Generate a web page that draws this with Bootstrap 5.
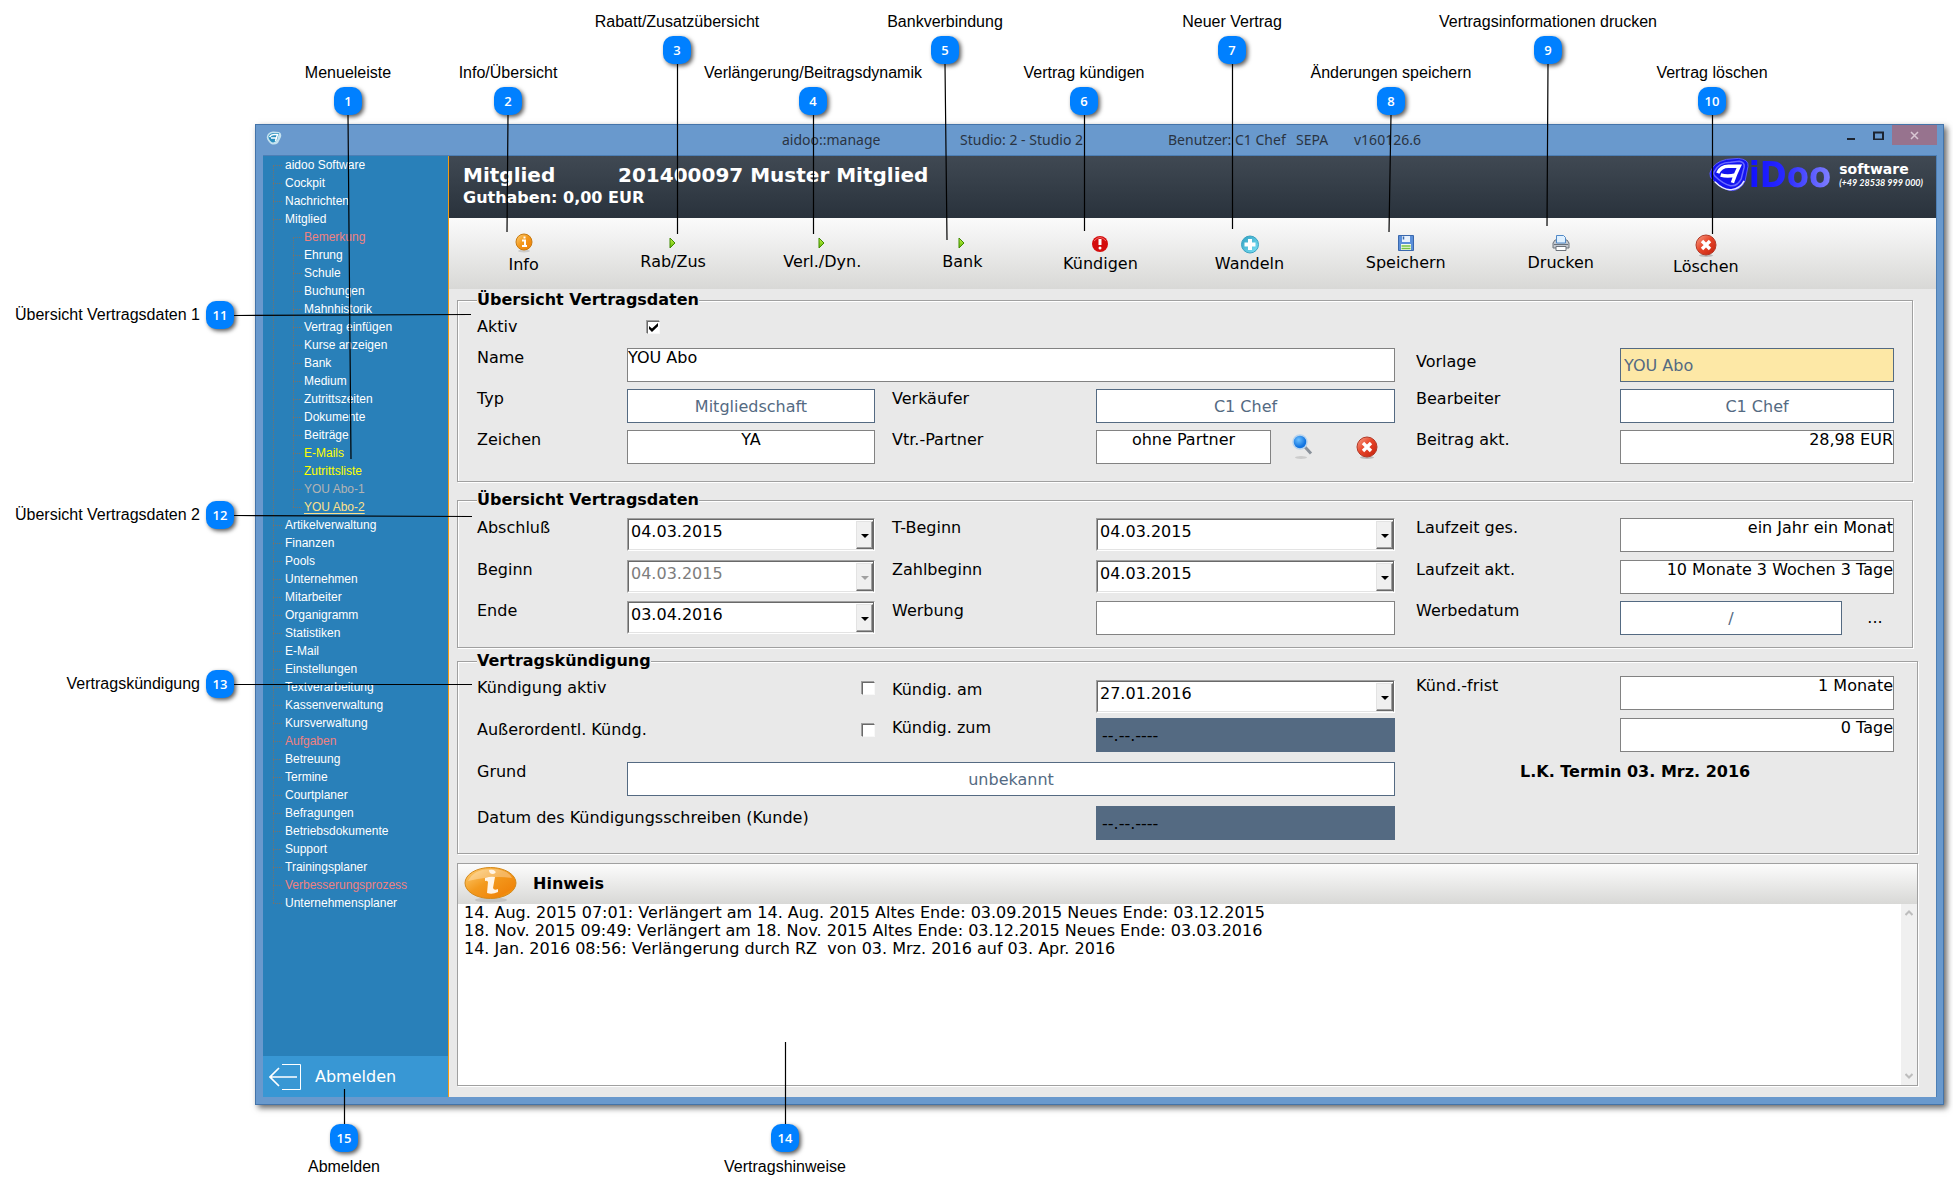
<!DOCTYPE html>
<html lang="de">
<head>
<meta charset="utf-8">
<meta name="viewport" content="width=device-width, initial-scale=1">
<title>aidoo::manage – Vertrag</title>
<link href="https://cdn.jsdelivr.net/npm/bootstrap@5.3.0/dist/css/bootstrap.min.css" rel="stylesheet">
<style>
  :root { --ui: "DejaVu Sans", Verdana, sans-serif; --help: "Liberation Sans", Arial, sans-serif; --steel: #546a82; }
  body { font-family: var(--ui); font-size: 16px; line-height: 20px; color: #000; background: #fff; }
  .stage { min-height: 100vh; padding: 124px 9px 87px 255px; }

  /* application window */
  .app-window { background: #6999cd; border: 1px solid #4474a9; padding: 0 6px 7px 7px; box-shadow: 3px 3px 6px rgba(0,0,0,.6); }
  .title-bar { height: 30px; font: 14px/30px "Noto Sans", sans-serif; color: #2a3442; }
  .title-bar .app-mark { margin: 6px 0 0 3px; }
  .title-bar .t-name { margin-left: 500px; width: 178px; }
  .title-bar .t-studio { width: 208px; }
  .title-bar .t-user { width: 128px; }
  .title-bar .t-sepa { width: 58px; }
  .title-bar button { border: 0; padding: 0; background: none; height: 20px; line-height: 0; }
  .title-bar .btn-min, .title-bar .btn-max { width: 27px; }
  .title-bar .btn-x { width: 45px; background: #97738e; }
  .app-body { border: 1px solid #4d7fb5; border-width: 1px 1px 0 0; }

  /* tree navigation */
  .side { width: 186px; background: #2980b9; border-right: 1px solid #f39c12; font: 12px/18px var(--help); }
  .tree, .tree ul { list-style: none; margin: 0; padding: 0; }
  .tree { padding: 0 0 0 10px; }
  .tree li { position: relative; padding-left: 12px; }
  .tree ul li { padding-left: 11px; }
  .tree ul { margin-left: 8px; }
  .tree li::before { content: ""; position: absolute; left: 0; top: 9px; width: 9px; border-top: 1px dotted #73736f; }
  .tree li:not(:last-child)::after { content: ""; position: absolute; left: 0; top: 9px; bottom: -9px; border-left: 1px dotted #73736f; }
  .tree a { color: #fff; text-decoration: none; display: block; }
  .tree .is-red { color: #f08080; } .tree .is-yellow { color: #ff0; } .tree .is-gray { color: #b4b4b4; }
  .tree .is-current { color: #fde08a; text-decoration: underline 1px; text-underline-offset: 2px; }
  .logout { background: #3897d4; border: 0; height: 41px; padding: 0 6px; color: #fff; font: 16px/20px var(--ui); gap: 13px; }

  /* header and tool bar */
  .member-head { height: 62px; background: linear-gradient(#404953, #29323c); color: #fff; font-weight: 700; padding: 9px 13px 0 14px; }
  .member-head h1 { font-size: 20px; line-height: 20px; font-weight: 700; margin: 0 0 3px; }
  .member-head h1 span { display: inline-block; width: 155px; }
  .member-head p { margin: 0; }
  .brand { margin-top: -8px; }
  .brand-word { font: bold 36px/36px "DejaVu Sans Condensed", "DejaVu Sans", sans-serif; background: linear-gradient(90deg, #1010ff, #2a2aff 45%, #8080ff); -webkit-background-clip: text; background-clip: text; color: transparent; }
  .brand-sub { margin: 5px 0 0 8px; font: bold 14px/15px "DejaVu Sans", sans-serif; }
  .brand-sub small { display: block; font: italic bold 9px/12px Lato, sans-serif; }
  .tools { display: grid; grid-template-columns: 149fr 150fr 148fr 132fr 144fr 154fr 158fr 152fr 138fr 161fr; height: 71px; background: linear-gradient(#fbfbfb, #d8d8d6); padding-top: 13px; }
  .tools button { border: 0; background: none; padding: 0; display: flex; flex-direction: column; align-items: center; color: #000; line-height: 20px; }
  .tools svg { display: block; }

  /* form */
  .work { background: #e9e9e9; padding: 1px 18px 11px 8px; }
  fieldset { border: 1px solid #a0a0a0; box-shadow: 1px 1px 0 #fff, inset 1px 1px 0 #fff; }
  fieldset legend { float: none; width: auto; margin: 0; font-size: 16px; line-height: 20px; font-weight: 700; background: #e9e9e9; }
  .fs-narrow { margin-right: 5px; }
  .fs-one { padding: 7px 18px 15px 19px; }
  .fs-two { padding: 8px 18px 10px 19px; margin-top: 8px; }
  .fs-three { padding: 5px 23px 13px 19px; margin-top: 3px; }
  .form-rows { display: grid; grid-template-columns: 150px 248fr 221px 299fr 225px 274fr; align-items: start; }
  .fs-one .form-rows { grid-template-rows: 31px 41px 41px 36px; }
  .fs-two .form-rows { grid-template-rows: 42px 41px 36px; }
  .fs-three .form-rows { grid-template-rows: 42px 44px 44px 34px; }
  .c1 { grid-column: 1; } .c2 { grid-column: 2; } .c3 { grid-column: 3; padding-left: 17px; } .c4 { grid-column: 4; } .c5 { grid-column: 5; padding-left: 21px; } .c6 { grid-column: 6; }
  .span-24 { grid-column: 2 / 5; } .span-13 { grid-column: 1 / 4; } .span-56 { grid-column: 5 / 7; padding-left: 125px; }
  .drop { padding-top: 4px; }
  .drop-half { padding-top: 2px; }
  .field { width: 100%; height: 34px; border: 1px solid #828282; border-radius: 0; background: #fff; padding: 0 0 15px; color: #000; }
  .field-pick { border-color: var(--steel); color: var(--steel); padding: 0 3px; }
  .field-tpl { background: #fde8a6; }
  .field-off { border: 0; background: var(--steel); padding: 0 6px; color: #000; }
  .combo { position: relative; height: 33px; border: 1px solid; border-color: #a0a0a0 #fff #fff #a0a0a0; }
  .combo select { appearance: none; width: 100%; height: 31px; border: 1px solid; border-color: #696969 #696969 #e3e3e3 #696969; border-radius: 0; background: #fff; padding: 0 0 6px 2px; color: #000; }
  .combo select:disabled { color: #7d7d7d; opacity: 1; }
  .combo span { position: absolute; right: 1px; top: 2px; bottom: 1px; width: 17px; background: #f0f0f0; border: 1px solid; border-color: #e3e3e3 #696969 #696969 #e3e3e3; box-shadow: inset -1px -1px 0 #a0a0a0; pointer-events: none; }
  .combo span::after { content: ""; position: absolute; left: 4px; top: 12px; border: 4px solid transparent; border-top-color: #000; border-bottom: 0; }
  .combo select:disabled + span::after { border-top-color: #a0a0a0; }
  .tick { appearance: none; display: block; width: 13px; height: 13px; margin: 4px 0 0; background: #fff; border: 1px solid; border-color: #696969 #f8f8f8 #f8f8f8 #696969; box-shadow: -1px -1px 0 #a0a0a0; }
  .tick:checked::before { content: ""; display: block; width: 9px; height: 9px; margin: 1px; background: #000; clip-path: polygon(0 33%, 33% 62%, 100% 0, 100% 36%, 33% 100%, 0 68%); }
  .bare { border: 0; background: none; padding: 0; color: #000; }
  .partner-tools { gap: 42px; padding: 0 17px 0 21px; }
  .more { width: 52px; padding: 0 0 0 14px; }

  /* notes */
  .notes { border: 1px solid #a0a0a0; box-shadow: 1px 1px 0 #fff; background: #fff; margin-top: 9px; }
  .notes-head { height: 40px; background: linear-gradient(#fcfcfc, #d8d8d6); font-size: 16px; font-weight: 700; gap: 16px; padding-left: 6px; }
  .notes textarea { border: 0; resize: none; padding: 0 0 0 6px; line-height: 18px; color: #000; overflow: hidden; min-height: 120px; outline: 0; }
  .notes-scroll { width: 16px; background: #f0f0f0; padding: 6px 0; }

  /* numbered callouts laid over the window */
  .lines { position: absolute; inset: 0; width: 100%; height: 100%; pointer-events: none; }
  .pin { position: absolute; display: flex; flex-direction: column; align-items: center; gap: 4px; width: 240px; margin-left: -120px; font: 16px/20px var(--help); white-space: nowrap; }
  .pin b { width: 28px; height: 28px; border-radius: 10px; background: #0080ff; color: #fff; font: 600 13px/28px "Open Sans", sans-serif; text-align: center; box-shadow: 2px 2px 4px rgba(0,0,0,.65); }
  .pin-high { top: 12px; } .pin-low { top: 63px; } .pin-foot { top: 1124px; flex-direction: column-reverse; justify-content: flex-end; gap: 5px; }
  .pin-side { left: 0; margin: 0; width: 234px; flex-direction: row; justify-content: flex-end; gap: 6px; }
  .p1 { left: 348px; } .p2 { left: 508px; } .p3 { left: 677px; } .p4 { left: 813px; } .p5 { left: 945px; }
  .p6 { left: 1084px; } .p7 { left: 1232px; } .p8 { left: 1391px; } .p9 { left: 1548px; } .p10 { left: 1712px; }
  .p11 { top: 301px; } .p12 { top: 501px; } .p13 { top: 670px; } .p14 { left: 785px; } .p15 { left: 344px; }
</style>
<script src="https://cdn.jsdelivr.net/npm/bootstrap@5.3.0/dist/js/bootstrap.bundle.min.js"></script>
</head>
<body>
<svg width="0" height="0" class="position-absolute" aria-hidden="true">
  <defs>
    <linearGradient id="gOrange" x1="0" y1="0" x2="1" y2="1"><stop offset="0" stop-color="#ffd27a"/><stop offset=".45" stop-color="#f39a1e"/><stop offset=".8" stop-color="#f0860c"/><stop offset="1" stop-color="#ffc21a"/></linearGradient>
    <linearGradient id="gRed" x1="0" y1="0" x2="1" y2="1"><stop offset="0" stop-color="#f7a48c"/><stop offset=".45" stop-color="#e8462a"/><stop offset="1" stop-color="#c3200c"/></linearGradient>
    <linearGradient id="gCyan" x1="0" y1="0" x2="1" y2="1"><stop offset="0" stop-color="#2e9fc0"/><stop offset="1" stop-color="#7fe4f8"/></linearGradient>
    <linearGradient id="gGreen" x1="0" y1="0" x2="0" y2="1"><stop offset="0" stop-color="#c6f24a"/><stop offset="1" stop-color="#5fb800"/></linearGradient>
    <radialGradient id="gLens" cx=".4" cy=".35"><stop offset="0" stop-color="#6cc0ff"/><stop offset="1" stop-color="#1274e0"/></radialGradient>
    <symbol id="i-arrow" viewBox="0 0 8 12"><path d="M1 1v10l5-5z" fill="url(#gGreen)" stroke="#3f8a00"/></symbol>
    <symbol id="i-close" viewBox="0 0 22 23"><ellipse cx="11" cy="21.500" rx="7" ry="1.500" fill="#bbb"/><circle cx="11" cy="11" r="10" fill="url(#gRed)" stroke="#b23a28"/><path d="M7 7l8 8M15 7l-8 8" stroke="#fff" stroke-width="3.400"/></symbol>
  </defs>
</svg>

<div class="stage d-flex position-relative">
  <div class="app-window d-flex flex-column flex-grow-1">
    <header class="title-bar d-flex">
      <svg class="app-mark" width="16" height="14" viewBox="0 0 16 14"><path d="M1 5Q2 1 7 0.500L13 1Q16 2 15 6L12 12Q9 14.500 5 13Q0 9 1 5z" fill="#c4e2ef"/><path d="M2.500 5Q4 2 8 2H13L11 9Q8 12.500 5.500 11Q2 8 2.500 5z" fill="#2a8fbe"/><path d="M3.500 6Q5 3.500 8 3.500H11.500L9.500 10M5 7h5" stroke="#fff" stroke-width="1.500" fill="none"/></svg>
      <span class="t-name">aidoo::manage</span><span class="t-studio">Studio: 2 - Studio 2</span><span class="t-user">Benutzer: C1 Chef</span><span class="t-sepa">SEPA</span><span>v160126.6</span>
      <div class="d-flex ms-auto">
        <button class="btn-min" aria-label="Minimieren"><svg width="9" height="10"><path d="M0 8h8v3H0z" fill="#1c2430"/></svg></button>
        <button class="btn-max" aria-label="Maximieren"><svg width="11" height="9"><path d="M1 1.500h9v7H1z" fill="none" stroke="#1c2430" stroke-width="2"/></svg></button>
        <button class="btn-x" aria-label="Schließen"><svg width="9" height="9"><path d="M1 1l7 7M8 1L1 8" stroke="#d8c6d3" stroke-width="1.500"/></svg></button>
      </div>
    </header>

    <div class="app-body d-flex flex-grow-1">
      <nav class="side d-flex flex-column flex-shrink-0" aria-label="Menueleiste">
        <ul class="tree flex-grow-1">
          <li><a href="#">aidoo Software</a></li>
          <li><a href="#">Cockpit</a></li>
          <li><a href="#">Nachrichten</a></li>
          <li><a href="#">Mitglied</a>
            <ul>
              <li><a href="#" class="is-red">Bemerkung</a></li>
              <li><a href="#">Ehrung</a></li>
              <li><a href="#">Schule</a></li>
              <li><a href="#">Buchungen</a></li>
              <li><a href="#">Mahnhistorik</a></li>
              <li><a href="#">Vertrag einfügen</a></li>
              <li><a href="#">Kurse anzeigen</a></li>
              <li><a href="#">Bank</a></li>
              <li><a href="#">Medium</a></li>
              <li><a href="#">Zutrittszeiten</a></li>
              <li><a href="#">Dokumente</a></li>
              <li><a href="#">Beiträge</a></li>
              <li><a href="#" class="is-yellow">E-Mails</a></li>
              <li><a href="#" class="is-yellow">Zutrittsliste</a></li>
              <li><a href="#" class="is-gray">YOU Abo-1</a></li>
              <li><a href="#" class="is-current">YOU Abo-2</a></li>
            </ul>
          </li>
          <li><a href="#">Artikelverwaltung</a></li>
          <li><a href="#">Finanzen</a></li>
          <li><a href="#">Pools</a></li>
          <li><a href="#">Unternehmen</a></li>
          <li><a href="#">Mitarbeiter</a></li>
          <li><a href="#">Organigramm</a></li>
          <li><a href="#">Statistiken</a></li>
          <li><a href="#">E-Mail</a></li>
          <li><a href="#">Einstellungen</a></li>
          <li><a href="#">Textverarbeitung</a></li>
          <li><a href="#">Kassenverwaltung</a></li>
          <li><a href="#">Kursverwaltung</a></li>
          <li><a href="#" class="is-red">Aufgaben</a></li>
          <li><a href="#">Betreuung</a></li>
          <li><a href="#">Termine</a></li>
          <li><a href="#">Courtplaner</a></li>
          <li><a href="#">Befragungen</a></li>
          <li><a href="#">Betriebsdokumente</a></li>
          <li><a href="#">Support</a></li>
          <li><a href="#">Trainingsplaner</a></li>
          <li><a href="#" class="is-red">Verbesserungsprozess</a></li>
          <li><a href="#">Unternehmensplaner</a></li>
        </ul>
        <button class="logout d-flex align-items-center"><svg width="33" height="28" viewBox="0 0 33 28" fill="none" stroke="#fff"><path d="M13 1.500h18.500v25H13"/><path d="M28 14H1M10 5L1 14l9 9" stroke-width="1.700"/></svg>Abmelden</button>
      </nav>

      <main class="d-flex flex-column flex-grow-1">
        <div class="member-head d-flex justify-content-between">
          <div>
            <h1><span>Mitglied</span>201400097 Muster Mitglied</h1>
            <p>Guthaben: 0,00 EUR</p>
          </div>
          <div class="brand d-flex">
            <svg width="40" height="36" viewBox="0 0 41 36"><path d="M1 16Q4 5 18 2L30 1Q41 2 40 9L37 24Q33 33 24 34Q15 34 5 24Q0 20 1 16z" fill="#1414f0" stroke="#5a5aff"/><path d="M5 15Q10 5 22 5L31 4Q37 5 36 10L33 22Q29 30 22 29Q14 27 6 19Q4 17 5 15z" fill="none" stroke="#6a6aff" stroke-width="1.500"/><path d="M9 16Q12 9 20 9H31Q27 17 24 26M12 18Q19 20 27 18" fill="none" stroke="#fff" stroke-width="3.500"/><path d="M6 25Q15 34 23 33Q32 32 36 24" fill="none" stroke="#e8e8ff" stroke-width="1.500"/></svg>
            <span class="brand-word">iDoo</span>
            <div class="brand-sub">software<small>(+49 28538 999 000)</small></div>
          </div>
        </div>

        <div class="tools" role="toolbar">
          <button><svg width="20" height="24" viewBox="0 0 20 24"><ellipse cx="10" cy="20" rx="6" ry="1.500" fill="#ccc"/><circle cx="10" cy="11" r="8" fill="url(#gOrange)" stroke="#c87a10"/><path d="M8 9.500h3V15M8 15h5M9.500 6.500h2" stroke="#fff" stroke-width="2" fill="none"/></svg>Info</button>
          <button><svg width="8" height="21" viewBox="0 0 8 21"><use href="#i-arrow" y="6" width="8" height="12"/></svg>Rab/Zus</button>
          <button><svg width="8" height="21" viewBox="0 0 8 21"><use href="#i-arrow" y="6" width="8" height="12"/></svg>Verl./Dyn.</button>
          <button><svg width="8" height="21" viewBox="0 0 8 21"><use href="#i-arrow" y="6" width="8" height="12"/></svg>Bank</button>
          <button><svg width="18" height="23" viewBox="0 0 18 23"><circle cx="9" cy="13" r="8" fill="#d40c0c"/><path d="M3 10Q9 3 15 10" stroke="#f06a6a" fill="none"/><path d="M9 8v6" stroke="#fff" stroke-width="3"/><circle cx="9" cy="17" r="1.500" fill="#fff"/></svg>Kündigen</button>
          <button><svg width="20" height="23" viewBox="0 0 20 23"><circle cx="10" cy="13.500" r="8.500" fill="url(#gCyan)" stroke="#3ba3c2"/><path d="M10 8v11M4.500 13.500h11" stroke="#fff" stroke-width="4"/></svg>Wandeln</button>
          <button><svg width="18" height="22" viewBox="0 0 18 22"><path d="M1.500 4.500h15v15h-15z" fill="#5b8fd9" stroke="#3a68ad"/><path d="M5 5h8v6H5z" fill="#e8f1fc"/><path d="M6.500 5.500v3" stroke="#3a68ad" stroke-width="1.500"/><path d="M4 13h10v6H4z" fill="#f4fbea"/><path d="M4.500 15h9M4.500 17.500h9" stroke="#76c442" stroke-width="1.500"/></svg>Speichern</button>
          <button><svg width="18" height="22" viewBox="0 0 18 22"><path d="M3 9h12l2 3v5H1v-5z" fill="#c4c9d0" stroke="#6c727b"/><path d="M4.500 12V4.500h7l2 2V12z" fill="#dff0ff" stroke="#5189c6"/><path d="M4 15.500h10v4H4z" fill="#fff" stroke="#6c727b"/><path d="M2 13.500h14" stroke="#6c727b"/></svg>Drucken</button>
          <button><svg width="22" height="26" viewBox="0 0 22 26"><use href="#i-close" y="3" width="22" height="23"/></svg>Löschen</button>
        </div>

        <form class="work d-flex flex-column flex-grow-1">
          <fieldset class="fs-one fs-narrow">
            <legend>Übersicht Vertragsdaten</legend>
            <div class="form-rows">
              <label class="c1" for="aktiv">Aktiv</label>
              <div class="c2 ps-3 ms-1"><input class="tick" type="checkbox" id="aktiv" checked></div>

              <label class="c1" for="name">Name</label><input class="field span-24" id="name" value="YOU Abo">
              <label class="c5 drop" for="vorlage">Vorlage</label><input class="field field-pick field-tpl c6" id="vorlage" value="YOU Abo" readonly>

              <label class="c1" for="typ">Typ</label><input class="field field-pick text-center c2" id="typ" value="Mitgliedschaft" readonly>
              <label class="c3" for="verk">Verkäufer</label><input class="field field-pick text-center c4" id="verk" value="C1 Chef" readonly>
              <label class="c5" for="bearb">Bearbeiter</label><input class="field field-pick text-center c6" id="bearb" value="C1 Chef" readonly>

              <label class="c1" for="zeichen">Zeichen</label><input class="field text-center c2" id="zeichen" value="YA">
              <label class="c3" for="partner">Vtr.-Partner</label>
              <div class="c4 d-flex align-items-center">
                <input class="field text-center w-50 flex-grow-1" id="partner" value="ohne Partner">
                <div class="partner-tools d-flex align-items-center">
                  <button type="button" class="bare" aria-label="Partner suchen"><svg class="d-block" width="22" height="26" viewBox="0 0 22 26"><ellipse cx="9" cy="23.500" rx="6" ry="1.500" fill="#ccc"/><path d="M13 13l6 6.500" stroke="#8b929b" stroke-width="3"/><circle cx="8" cy="8" r="7" fill="url(#gLens)" stroke="#b9d4ee" stroke-width="1.500"/></svg></button>
                  <button type="button" class="bare" aria-label="Partner entfernen"><svg class="d-block" width="22" height="23"><use href="#i-close" width="22" height="23"/></svg></button>
                </div>
              </div>
              <label class="c5" for="beitrag">Beitrag akt.</label><input class="field text-end c6" id="beitrag" value="28,98 EUR">
            </div>
          </fieldset>

          <fieldset class="fs-two fs-narrow">
            <legend>Übersicht Vertragsdaten</legend>
            <div class="form-rows">
              <label class="c1" for="abschluss">Abschluß</label><div class="combo c2"><select id="abschluss"><option>04.03.2015</option></select><span></span></div>
              <label class="c3" for="tbeginn">T-Beginn</label><div class="combo c4"><select id="tbeginn"><option>04.03.2015</option></select><span></span></div>
              <label class="c5" for="lges">Laufzeit ges.</label><input class="field text-end c6" id="lges" value="ein Jahr ein Monat">

              <label class="c1" for="beginn">Beginn</label><div class="combo c2"><select id="beginn" disabled><option>04.03.2015</option></select><span></span></div>
              <label class="c3" for="zahl">Zahlbeginn</label><div class="combo c4"><select id="zahl"><option>04.03.2015</option></select><span></span></div>
              <label class="c5" for="lakt">Laufzeit akt.</label><input class="field text-end c6" id="lakt" value="10 Monate 3 Wochen 3 Tage">

              <label class="c1" for="ende">Ende</label><div class="combo c2"><select id="ende"><option>03.04.2016</option></select><span></span></div>
              <label class="c3" for="werbung">Werbung</label><input class="field c4" id="werbung">
              <label class="c5" for="wdatum">Werbedatum</label>
              <div class="c6 d-flex"><input class="field field-pick text-center flex-grow-1 w-50" id="wdatum" value="/" readonly><button type="button" class="bare more" aria-label="Datum wählen">...</button></div>
            </div>
          </fieldset>

          <fieldset class="fs-three">
            <legend>Vertragskündigung</legend>
            <div class="form-rows">
              <label class="c1 text-nowrap drop-half" for="kakt">Kündigung aktiv</label><div class="c2 drop-half d-flex justify-content-end"><input class="tick" type="checkbox" id="kakt"></div>
              <label class="c3 drop" for="kam">Kündig. am</label><div class="c4 drop"><div class="combo"><select id="kam"><option>27.01.2016</option></select><span></span></div></div>
              <label class="c5" for="kfrist">Künd.-frist</label><input class="field text-end c6" id="kfrist" value="1 Monate">

              <label class="c1 text-nowrap drop-half" for="ausser">Außerordentl. Kündg.</label><div class="c2 drop-half d-flex justify-content-end"><input class="tick" type="checkbox" id="ausser"></div>
              <label class="c3" for="kzum">Kündig. zum</label><input class="field field-off c4" id="kzum" value="--.--.----" readonly>
              <input class="field text-end c6" aria-label="Kündigungsfrist Tage" value="0 Tage">

              <label class="c1" for="grund">Grund</label><input class="field field-pick text-center span-24" id="grund" value="unbekannt" readonly>
              <strong class="span-56">L.K. Termin 03. Mrz. 2016</strong>

              <label class="span-13 drop-half" for="kdatum">Datum des Kündigungsschreiben (Kunde)</label><input class="field field-off c4" id="kdatum" value="--.--.----" readonly>
            </div>
          </fieldset>

          <section class="notes d-flex flex-column flex-grow-1">
            <div class="notes-head d-flex align-items-center">
              <svg width="53" height="38" viewBox="0 0 53 38"><ellipse cx="27" cy="35" rx="16" ry="2.500" fill="#c4c4c2"/><ellipse cx="26.500" cy="18" rx="25.500" ry="15.500" fill="url(#gOrange)" stroke="#d48a1c"/><path d="M4 16Q10 4 27 4T48 13Q30 10 4 16z" fill="#fff" opacity=".3"/><path d="M25 5q4-1 6 1t-2 3q-4 0-4-4zM21 13q6-2 10-1l-2 11q1 3 5 1v3q-6 3-11 1l1-11q-1-2-3-1z" fill="#fff4e6"/></svg>
              <label for="hinweis">Hinweis</label>
            </div>
            <div class="d-flex flex-grow-1">
              <textarea class="flex-grow-1" id="hinweis" readonly>14. Aug. 2015 07:01: Verlängert am 14. Aug. 2015 Altes Ende: 03.09.2015 Neues Ende: 03.12.2015
18. Nov. 2015 09:49: Verlängert am 18. Nov. 2015 Altes Ende: 03.12.2015 Neues Ende: 03.03.2016
14. Jan. 2016 08:56: Verlängerung durch RZ  von 03. Mrz. 2016 auf 03. Apr. 2016</textarea>
              <div class="notes-scroll d-flex flex-column justify-content-between align-items-center">
                <svg width="8" height="6"><path d="M0.500 5L4 1.500L7.500 5" fill="none" stroke="#bdbdbd" stroke-width="2"/></svg>
                <svg width="8" height="6"><path d="M0.500 1L4 4.500L7.500 1" fill="none" stroke="#bdbdbd" stroke-width="2"/></svg>
              </div>
            </div>
          </section>
        </form>
      </main>
    </div>
  </div>

  <svg class="lines" stroke="#000" stroke-width="1.200" aria-hidden="true">
    <path d="M348 115L351 459M508 115L507 232M677.500 64V234M813.500 115V234M945 64L947 240M1084.500 115V231M1232.500 64V229M1391 115L1389 232M1548 64L1547 226M1712.500 115V234M234 315.500L471 314.500M234 515.500L472 516.500M234 684.500H472M785.500 1042V1124M344.500 1089V1124"/>
  </svg>
  <div class="pin pin-low p1">Menueleiste<b>1</b></div>
  <div class="pin pin-low p2">Info/Übersicht<b>2</b></div>
  <div class="pin pin-high p3">Rabatt/Zusatzübersicht<b>3</b></div>
  <div class="pin pin-low p4">Verlängerung/Beitragsdynamik<b>4</b></div>
  <div class="pin pin-high p5">Bankverbindung<b>5</b></div>
  <div class="pin pin-low p6">Vertrag kündigen<b>6</b></div>
  <div class="pin pin-high p7">Neuer Vertrag<b>7</b></div>
  <div class="pin pin-low p8">Änderungen speichern<b>8</b></div>
  <div class="pin pin-high p9">Vertragsinformationen drucken<b>9</b></div>
  <div class="pin pin-low p10">Vertrag löschen<b>10</b></div>
  <div class="pin pin-side p11">Übersicht Vertragsdaten 1<b>11</b></div>
  <div class="pin pin-side p12">Übersicht Vertragsdaten 2<b>12</b></div>
  <div class="pin pin-side p13">Vertragskündigung<b>13</b></div>
  <div class="pin pin-foot p14">Vertragshinweise<b>14</b></div>
  <div class="pin pin-foot p15">Abmelden<b>15</b></div>
</div>
</body>
</html>
